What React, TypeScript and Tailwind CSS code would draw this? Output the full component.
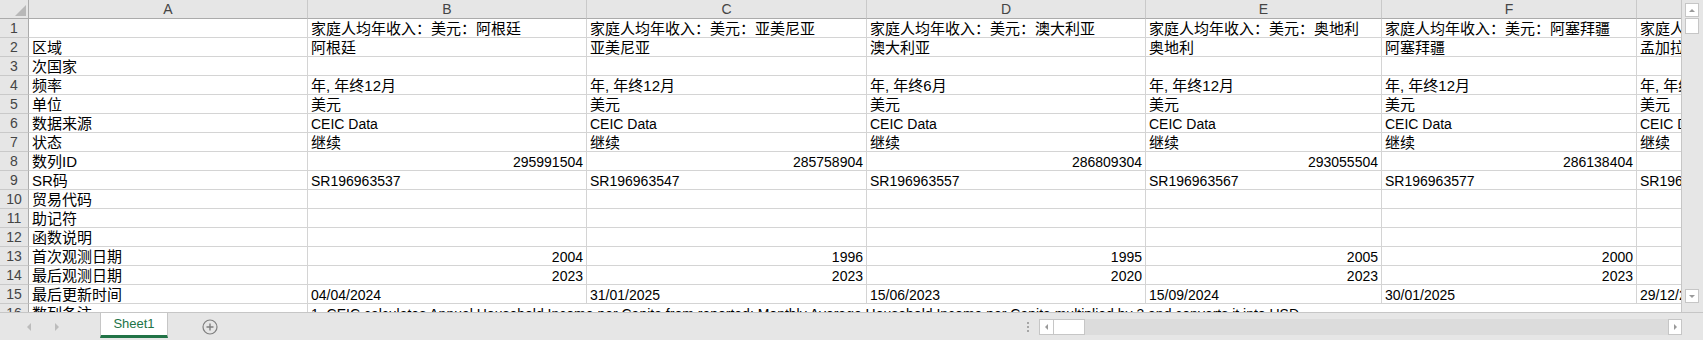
import React from "react";

type Val = string | number;

const FONT = { fontFamily: "'Liberation Sans','Noto Sans CJK SC',sans-serif" };

const cols = ["A", "B", "C", "D", "E", "F", "G"];

const title = (c: string) => `家庭人均年收入：美元：${c}`;

const rows: [string, Val[]][] = [
  ["", [title("阿根廷"), title("亚美尼亚"), title("澳大利亚"), title("奥地利"), title("阿塞拜疆"), title("孟加拉国")]],
  ["区域", ["阿根廷", "亚美尼亚", "澳大利亚", "奥地利", "阿塞拜疆", "孟加拉国"]],
  ["次国家", ["", "", "", "", "", ""]],
  ["频率", ["年, 年终12月", "年, 年终12月", "年, 年终6月", "年, 年终12月", "年, 年终12月", "年, 年终12月"]],
  ["单位", ["美元", "美元", "美元", "美元", "美元", "美元"]],
  ["数据来源", ["CEIC Data", "CEIC Data", "CEIC Data", "CEIC Data", "CEIC Data", "CEIC Data"]],
  ["状态", ["继续", "继续", "继续", "继续", "继续", "继续"]],
  ["数列ID", [295991504, 285758904, 286809304, 293055504, 286138404, 284512204]],
  ["SR码", ["SR196963537", "SR196963547", "SR196963557", "SR196963567", "SR196963577", "SR196963587"]],
  ["贸易代码", ["", "", "", "", "", ""]],
  ["助记符", ["", "", "", "", "", ""]],
  ["函数说明", ["", "", "", "", "", ""]],
  ["首次观测日期", [2004, 1996, 1995, 2005, 2000, 2010]],
  ["最后观测日期", [2023, 2023, 2020, 2023, 2023, 2022]],
  ["最后更新时间", ["04/04/2024", "31/01/2025", "15/06/2023", "15/09/2024", "30/01/2025", "29/12/2023"]],
];

const note =
  "1. CEIC calculates Annual Household Income per Capita from reported: Monthly Average Household Income per Capita multiplied by 3 and converts it into USD.";

const isLatin = (v: Val) => typeof v === "number" || /^[\x00-\x7f]*$/.test(v);

function Cell({ v }: { v: Val }) {
  return (
    <div
      className={`h-[19px] border-r border-b border-[#d4d4d4] px-[3px] overflow-hidden whitespace-nowrap leading-[20px] text-black ${
        typeof v === "number" ? "text-right" : "text-left"
      } ${isLatin(v) ? "text-[14px]" : "text-[15px]"}`}
    >
      {v}
    </div>
  );
}

function RowHead({ n }: { n: number }) {
  return (
    <div className="h-[19px] bg-[#e6e6e6] border-r border-b border-r-[#ababab] border-b-[#c9c9c9] text-center text-[14px] leading-[19px] text-[#444]">
      {n}
    </div>
  );
}

function Tri({ dir, color = "#bcbcbc", size = 4 }: { dir: "l" | "r" | "u" | "d"; color?: string; size?: number }) {
  const s = size;
  const pts =
    dir === "l"
      ? `${s},0 ${s},${s * 2} 0,${s}`
      : dir === "r"
      ? `0,0 0,${s * 2} ${s},${s}`
      : dir === "u"
      ? `0,${s} ${s * 2},${s} ${s},0`
      : `0,0 ${s * 2},0 ${s},${s}`;
  const w = dir === "l" || dir === "r" ? s : s * 2;
  const h = dir === "l" || dir === "r" ? s * 2 : s;
  return (
    <svg width={w} height={h} viewBox={`0 0 ${w} ${h}`}>
      <polygon points={pts} fill={color} />
    </svg>
  );
}

export default function App() {
  return (
    <div className="w-[1703px] h-[340px] flex flex-col bg-[#e6e6e6] overflow-hidden" style={FONT}>
      <div className="flex h-[312px]">
        {/* sheet grid */}
        <div className="w-[1682px] h-[312px] overflow-hidden bg-white border-r border-[#c6c6c6]">
          <div className="grid grid-cols-[29px_279px_279px_280px_279px_236px_255px_280px] w-max">
            {/* column header */}
            <div className="h-[19px] bg-[#e6e6e6] border-r border-b border-[#ababab] flex items-end justify-end p-[2px]">
              <svg width="11" height="11" viewBox="0 0 11 11">
                <polygon points="11,0 11,11 0,11" fill="#b8b8b8" />
              </svg>
            </div>
            {cols.map((c) => (
              <div
                key={c}
                className="h-[19px] bg-[#e6e6e6] border-r border-b border-r-[#c9c9c9] border-b-[#ababab] text-center text-[14px] leading-[19px] text-[#444]"
              >
                {c}
              </div>
            ))}

            {rows.map(([label, vals], i) => (
              <React.Fragment key={i}>
                <RowHead n={i + 1} />
                <Cell v={label} />
                {vals.map((v, j) => (
                  <Cell key={j} v={v} />
                ))}
              </React.Fragment>
            ))}

            {/* row 16: note overflows across the columns */}
            <RowHead n={16} />
            <Cell v="数列备注" />
            <div className="col-span-6 h-[19px] border-b border-[#d4d4d4] px-[3px] whitespace-nowrap overflow-hidden text-[14px] leading-[20px] text-black">
              {note}
            </div>
          </div>
        </div>

        {/* vertical scrollbar */}
        <div className="w-[21px] flex flex-col pl-[3px] pr-[4px] pt-[3px] pb-[9px]">
          <div className="h-[14px] bg-white border border-[#c6c6c6] flex items-center justify-center">
            <Tri dir="u" color="#9a9a9a" size={3} />
          </div>
          <div className="h-[16px] mt-[1px] bg-white border border-[#c6c6c6]" />
          <div className="flex-1" />
          <div className="h-[14px] bg-white border border-[#c6c6c6] flex items-center justify-center">
            <Tri dir="d" color="#9a9a9a" size={3} />
          </div>
        </div>
      </div>

      {/* sheet tabs bar */}
      <div className="h-[28px] border-t border-[#c6c6c6] flex items-start">
        <div className="w-[100px] h-[27px] flex items-center pl-[27px] gap-[24px]">
          <Tri dir="l" />
          <Tri dir="r" />
        </div>
        <div className="w-[68px] h-[25px] bg-white border-x border-[#c6c6c6] border-b-[3px] border-b-[#217346] flex items-center justify-center text-[13px] text-[#217346]">
          Sheet1
        </div>
        <div className="ml-[34px] h-[27px] flex items-center">
          <svg width="16" height="16" viewBox="0 0 16 16">
            <circle cx="8" cy="8" r="7" fill="none" stroke="#7f7f7f" strokeWidth="1.2" />
            <path d="M8 4.5v7M4.5 8h7" stroke="#7f7f7f" strokeWidth="1.4" />
          </svg>
        </div>
        <div className="flex-1" />
        <div className="h-[27px] flex flex-col items-center justify-center gap-[2px] mr-[10px]">
          <span className="w-[2px] h-[2px] bg-[#a6a6a6]" />
          <span className="w-[2px] h-[2px] bg-[#a6a6a6]" />
          <span className="w-[2px] h-[2px] bg-[#a6a6a6]" />
        </div>
        {/* horizontal scrollbar */}
        <div className="w-[643px] h-[27px] flex items-center">
          <div className="w-full h-[16px] flex bg-[#dcdcdc]">
            <div className="w-[15px] h-[16px] bg-white border border-[#c6c6c6] flex items-center justify-center">
              <Tri dir="l" color="#9a9a9a" size={3} />
            </div>
            <div className="w-[31px] h-[16px] bg-white border border-l-0 border-[#c6c6c6]" />
            <div className="flex-1" />
            <div className="w-[14px] h-[16px] bg-white border border-[#c6c6c6] flex items-center justify-center">
              <Tri dir="r" color="#9a9a9a" size={3} />
            </div>
          </div>
        </div>
        <div className="w-[21px]" />
      </div>
    </div>
  );
}
